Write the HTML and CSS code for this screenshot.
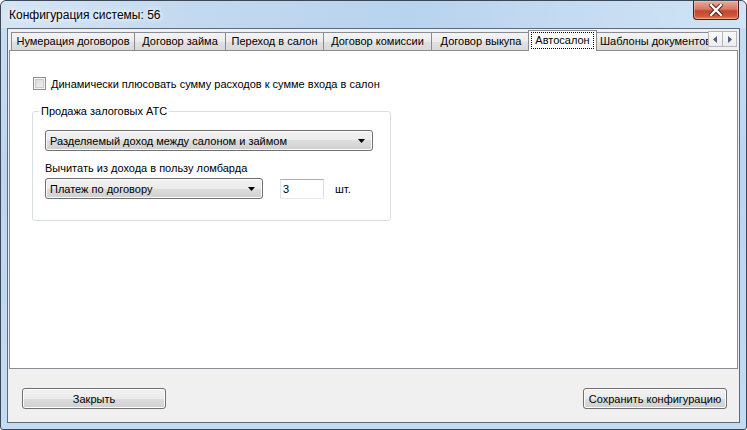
FILE: index.html
```html
<!DOCTYPE html>
<html lang="ru">
<head>
    <meta charset="UTF-8">
    <title>Конфигурация системы: 56</title>
    <link rel="stylesheet" href="styles.css">
</head>
<body>
    <div class="window">
        <div class="titlebar">
            <span class="title">Конфигурация системы: 56</span>
            <div class="close-btn">
                <svg width="14" height="12" viewBox="0 0 14 12">
                    <path d="M2 1 L12 11 M12 1 L2 11" stroke="#4a1a14" stroke-width="4.2" stroke-linecap="square"/>
                    <path d="M2 1 L12 11 M12 1 L2 11" stroke="#ffffff" stroke-width="2.4" stroke-linecap="square"/>
                </svg>
            </div>
        </div>

        <div class="client">
            <div class="tab-control">
                <div class="tabs">
                    <div class="tab tab-num">Нумерация договоров</div>
                    <div class="tab tab-loan">Договор займа</div>
                    <div class="tab tab-move">Переход в салон</div>
                    <div class="tab tab-comm">Договор комиссии</div>
                    <div class="tab tab-buy">Договор выкупа</div>
                    <div class="tab active"><span class="focus">Автосалон</span></div>
                    <div class="tab tab-clip">Шаблоны документов</div>
                    <div class="tab-scroll">
                        <div class="scroll-btn">
                            <svg width="5" height="7" viewBox="0 0 5 7"><path d="M4 0 L0 3.5 L4 7 Z" fill="#4d6185"/></svg>
                        </div>
                        <div class="scroll-btn">
                            <svg width="5" height="7" viewBox="0 0 5 7"><path d="M1 0 L5 3.5 L1 7 Z" fill="#4d6185"/></svg>
                        </div>
                    </div>
                </div>

                <div class="panel">
                    <div class="check-row">
                        <span class="checkbox"></span>
                        <span>Динамически плюсовать сумму расходов к сумме входа в салон</span>
                    </div>

                    <fieldset class="group">
                        <legend>Продажа залоговых АТС</legend>
                        <div class="group-body">
                            <div class="combo combo-wide">
                                <span>Разделяемый доход между салоном и займом</span>
                                <svg class="combo-arrow" width="7" height="4" viewBox="0 0 7 4"><path d="M0 0 H7 L3.5 4 Z" fill="#000"/></svg>
                            </div>
                            <div class="field-label">Вычитать из дохода в пользу ломбарда</div>
                            <div class="field-row">
                                <div class="combo combo-narrow">
                                    <span>Платеж по договору</span>
                                    <svg class="combo-arrow" width="7" height="4" viewBox="0 0 7 4"><path d="M0 0 H7 L3.5 4 Z" fill="#000"/></svg>
                                </div>
                                <div class="textbox">3</div>
                                <span class="unit">шт.</span>
                            </div>
                        </div>
                    </fieldset>
                </div>
            </div>

            <div class="footer">
                <button class="btn">Закрыть</button>
                <button class="btn">Сохранить конфигурацию</button>
            </div>
        </div>
    </div>
</body>
</html>
```

FILE: styles.css
```css
body {
    margin: 0;
    font-family: "Liberation Sans", Arial, sans-serif;
    font-size: 11px;
    color: #000;
}

.window {
    width: 747px;
    height: 430px;
    box-sizing: border-box;
    display: flex;
    flex-direction: column;
    padding: 0 6px 6px 6px;
    border: 1px solid #3c4856;
    border-radius: 6px 6px 3px 3px;
    background: linear-gradient(to bottom, #c9def4, #bcd6f0 40%, #c4dcf3);
}

/* заголовок окна */
.titlebar {
    height: 27px;
    display: flex;
    align-items: center;
    margin: 0 -6px;
    padding-left: 8px;
    background: linear-gradient(100deg, #d6e5f4 0%, #c3d9ef 25%, #b8d3ee 55%, #c6dcf2 80%, #d2e4f5 100%);
    border-radius: 6px 6px 0 0;
}

.title {
    font-size: 12px;
    color: #000;
    text-shadow: 0 0 8px #ffffff, 0 0 4px #ffffff;
}

.close-btn {
    margin-left: auto;
    margin-right: 7px;
    align-self: flex-start;
    width: 46px;
    height: 19px;
    box-sizing: border-box;
    display: flex;
    justify-content: center;
    align-items: center;
    border: 1px solid #4b1c16;
    border-top: none;
    border-radius: 0 0 4px 4px;
    background: linear-gradient(to bottom, #e9a99b 0%, #d77a66 45%, #c4452f 55%, #cf5a3c 85%, #e58a5c 100%);
    box-shadow: inset 0 0 0 1px rgba(255, 210, 200, 0.45);
}

/* клиентская область */
.client {
    flex: 1;
    display: flex;
    flex-direction: column;
    background: #f0f0f0;
    border: 1px solid #5b6a7c;
}

.tab-control {
    margin: 0 1px;
    display: flex;
    flex-direction: column;
}

.tabs {
    display: flex;
    align-items: flex-end;
    height: 21px;
    margin: 1px 0 -1px 0;
    padding-left: 2px;
}

.tab {
    flex: none;
    height: 18px;
    box-sizing: border-box;
    margin-bottom: 1px;
    margin-left: -1px;
    border: 1px solid #898c95;
    border-bottom: none;
    background: linear-gradient(to bottom, #f4f4f4, #ebebeb 50%, #e0e0e0 51%, #d9d9d9);
    text-align: center;
    line-height: 17px;
    white-space: nowrap;
}

.tab:first-child {
    margin-left: 0;
}

.tab-num { width: 124px; }
.tab-loan { width: 92px; }
.tab-move { width: 99px; }
.tab-comm { width: 109px; }
.tab-buy { width: 100px; }

.tab.active {
    width: 69px;
    height: 21px;
    margin: 0 -2px 0 -3px;
    padding: 1px 2px 3px 2px;
    background: #ffffff;
    position: relative;
    z-index: 2;
    line-height: 15px;
}

.focus {
    display: block;
    height: 17px;
    box-sizing: border-box;
    border: 1px dotted #000;
    line-height: 15px;
}

.tab-clip {
    flex: 1;
    min-width: 0;
    overflow: hidden;
    text-align: left;
    padding-left: 5px;
    border-right: none;
}

.tab-scroll {
    flex: none;
    align-self: flex-start;
    display: flex;
    margin: 1px 1px 0 0;
}

.scroll-btn {
    width: 15px;
    height: 16px;
    box-sizing: border-box;
    border: 1px solid #b4b7bd;
    margin-left: -1px;
    background: linear-gradient(to bottom, #fafafa, #ececec);
    display: flex;
    justify-content: center;
    align-items: center;
}

.panel {
    height: 319px;
    box-sizing: border-box;
    background: #ffffff;
    border: 1px solid #898c95;
    padding: 26px 0 0 22px;
}

.check-row {
    display: flex;
    align-items: center;
    gap: 5px;
    margin-left: 1px;
    height: 13px;
}

.checkbox {
    width: 13px;
    height: 13px;
    box-sizing: border-box;
    border: 1px solid #8f8f8f;
    background: linear-gradient(135deg, #d2d4d8, #f4f4f4);
    box-shadow: inset 0 0 0 1px #f4f4f4, inset 0 0 0 2px #c9cbcf;
}

.group {
    width: 359px;
    box-sizing: border-box;
    margin: 15px 0 0 0;
    padding: 0 17px 21px 6px;
    border: 1px solid #d5dfe5;
    border-radius: 3px;
}

.group legend {
    padding: 0 2px;
    line-height: 13px;
}

.group-body {
    padding-left: 6px;
}

.combo {
    height: 21px;
    box-sizing: border-box;
    display: flex;
    align-items: center;
    justify-content: space-between;
    padding: 0 7px 0 4px;
    border: 1px solid #707070;
    border-radius: 3px;
    background: linear-gradient(to bottom, #f2f2f2 0%, #ebebeb 50%, #dddddd 50%, #cfcfcf 100%);
    box-shadow: inset 0 0 0 1px #fcfcfc;
}

.combo-wide {
    width: 328px;
    margin-top: 12px;
}

.combo-narrow {
    width: 218px;
}

.field-label {
    margin-top: 11px;
    line-height: 13px;
}

.field-row {
    display: flex;
    align-items: center;
    margin-top: 3px;
}

.textbox {
    width: 44px;
    height: 20px;
    box-sizing: border-box;
    margin-left: 17px;
    padding-left: 2px;
    line-height: 18px;
    border: 1px solid;
    border-color: #abadb3 #dbdfe6 #e3e9ef #e2e3ea;
    background: #fff;
}

.unit {
    margin-left: 11px;
}

.footer {
    height: 53px;
    box-sizing: border-box;
    display: flex;
    justify-content: space-between;
    align-items: flex-start;
    padding: 19px 12px 0 14px;
}

.btn {
    width: 144px;
    height: 21px;
    padding: 0;
    font-family: inherit;
    font-size: 11px;
    color: #000;
    border: 1px solid #707070;
    border-radius: 3px;
    background: linear-gradient(to bottom, #f2f2f2 0%, #ebebeb 50%, #dddddd 50%, #cfcfcf 100%);
    box-shadow: inset 0 0 0 1px #fcfcfc;
}
```
